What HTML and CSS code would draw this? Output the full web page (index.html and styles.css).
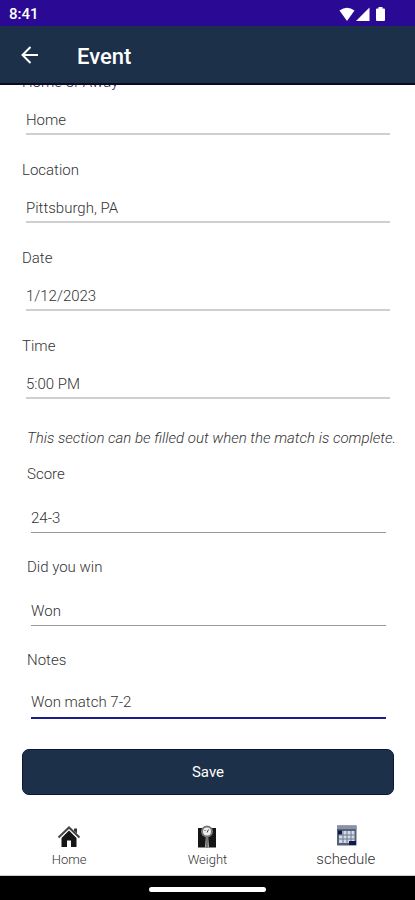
FILE: index.html
```html
<!DOCTYPE html>
<html lang="en">
<head>
<meta charset="utf-8">
<meta name="viewport" content="width=device-width, initial-scale=1">
<title>Event</title>
<link rel="stylesheet" href="styles.css">
</head>
<body>
<div class="status">
  <span>8:41</span>
  <svg class="status-icons" width="48" height="16" viewBox="0 0 48 16" fill="#fff" aria-hidden="true">
    <path d="M0.500 4.500Q8-1 15.500 4.500L8 15Z"/>
    <path d="M30.500 1.500V15H17Z"/>
    <path d="M39.500 1h4v1.500h1.500a1 1 0 0 1 1 1V14a1 1 0 0 1-1 1h-7a1 1 0 0 1-1-1V3.500a1 1 0 0 1 1-1h1.500Z"/>
  </svg>
</div>
<header class="bar">
  <button class="back" type="button" aria-label="Back">
    <svg width="20" height="20" viewBox="0 0 20 20" fill="none" stroke="#fff" stroke-width="2" aria-hidden="true"><path d="M18 10H3M10.500 2L2.500 10L10.500 18"/></svg>
  </button>
  <h1>Event</h1>
</header>
<main class="content">
  <form class="form">
    <div class="field"><label class="accent" for="place">Home or Away</label><input id="place" value="Home"></div>
    <div class="field"><label for="location">Location</label><input id="location" value="Pittsburgh, PA"></div>
    <div class="field"><label for="date">Date</label><input id="date" value="1/12/2023"></div>
    <div class="field"><label for="time">Time</label><input id="time" value="5:00 PM"></div>
    <section class="result">
      <p class="hint">This section can be filled out when the match is complete.</p>
      <div class="field"><label for="score">Score</label><input id="score" value="24-3"></div>
      <div class="field"><label for="win">Did you win</label><input id="win" value="Won"></div>
      <div class="field active"><label for="notes">Notes</label><input id="notes" value="Won match 7-2"></div>
    </section>
    <button class="save" type="button">Save</button>
  </form>
</main>
<nav class="tabs">
  <a href="#home">
    <svg width="24" height="24" viewBox="0 0 24 24" aria-hidden="true"><path d="M4.500 13L12 5.500L19.500 13V22H14V15.500H10V22H4.500Z" fill="#151515"/><path d="M1.500 12.500L12 2.500L22.500 12.500" fill="none" stroke="#444" stroke-width="2"/><path d="M17 3.500h3v5l-3-3Z" fill="#333"/></svg>
    <span>Home</span>
  </a>
  <a href="#weight">
    <svg width="24" height="24" viewBox="0 0 24 24" aria-hidden="true"><path d="M3 3H21V22.500H3Z" fill="#151515"/><path d="M11 10h2l1 12.500h-4Z" fill="#bbb"/><path d="M12 11V22.500" stroke="#333"/><circle cx="12" cy="6.500" r="5" fill="#eee" stroke="#777" stroke-width="2"/><path d="M12 7.500L13.500 4.500M9.500 6l1-1" stroke="#444"/></svg>
    <span>Weight</span>
  </a>
  <a class="current" href="#schedule">
    <svg width="24" height="24" viewBox="0 0 24 24" aria-hidden="true"><path d="M3 1.500H22.500V21.500H3Z" fill="#566176"/><path d="M3 1.500H22.500V5H3Z" fill="#8793a8"/><path d="M5 7H20.500V19H5Z" fill="#d3dae5"/><path d="M5 11H20.500M5 15H20.500M9 7V19M13 7V19M17 7V19" stroke="#6b788e"/><path d="M4 6.500H8V10.500H4ZM15 17H22V21H15Z" fill="#10194b"/></svg>
    <span>schedule</span>
  </a>
</nav>
<div class="gesture"><div class="handle"></div></div>
</body>
</html>
```
FILE: styles.css
```css
* { box-sizing: border-box; }

body {
  margin: 0;
  min-height: 100vh;
  display: flex;
  flex-direction: column;
  background: #fff;
  color: #333;
  font: 300 15px/20px Roboto, sans-serif;
}

.status {
  height: 26px;
  padding: 1px 28px 0 9px;
  display: flex;
  align-items: center;
  justify-content: space-between;
  background: #2a0a94;
  color: #fff;
  font-size: 15px;
  font-weight: 500;
}

.bar {
  height: 59px;
  padding: 0 20px;
  display: flex;
  align-items: center;
  gap: 37px;
  background: #1d3049;
  border-bottom: 2px solid #080c1c;
  color: #fff;
}

.bar h1 {
  margin: 0;
  padding-top: 4px;
  font-size: 22px;
  font-weight: 500;
  line-height: 28px;
}

.back {
  display: flex;
  padding: 0;
  border: 0;
  background: none;
}

.content {
  flex: 1;
  overflow: hidden;
}

/* The form is scrolled part of the way under the app bar. */
.form {
  margin-top: -13px;
  padding: 0 21px 0 22px;
}

.field {
  display: flex;
  flex-direction: column;
  gap: 15px;
  margin-bottom: 25px;
}

.accent { color: #1c1c6c; }

.field input {
  height: 28px;
  margin: 0 4px;
  padding: 0;
  border: 0;
  border-bottom: 2px solid #cfcfcf;
  border-radius: 0;
  outline: 0;
  background: none;
  color: #333;
  font: inherit;
}

.result { padding: 4px 0 0 5px; }

.hint {
  margin: 0 0 16px;
  font-style: italic;
  white-space: nowrap;
}

.result .field {
  gap: 19px;
  margin-bottom: 24px;
}

.result input {
  height: 30px;
  margin-right: 8px;
  border-bottom: 1px solid #999;
}

.result .active {
  gap: 16px;
  margin-bottom: 30px;
}

.active input {
  height: 33px;
  border-bottom: 2px solid #1c1c8c;
}

.save {
  display: block;
  width: 100%;
  height: 46px;
  padding: 0;
  border: 1px solid #0c1838;
  border-radius: 7px;
  background: #1d3049;
  color: #fff;
  font: 400 15px/20px Roboto, sans-serif;
}

.tabs {
  display: grid;
  grid-template-columns: repeat(3, 1fr);
  height: 56px;
  border-bottom: 1px solid #ccc;
}

.tabs a {
  display: flex;
  flex-direction: column;
  align-items: center;
  padding-top: 5px;
  color: #333;
  font-size: 13px;
  text-decoration: none;
}

.tabs span { line-height: 22px; }

.tabs .current {
  padding-top: 4px;
  font-size: 15px;
}

.gesture {
  height: 24px;
  display: flex;
  align-items: center;
  justify-content: center;
  padding-top: 3px;
  background: #000;
}

.handle {
  width: 28%;
  height: 5px;
  border-radius: 3px;
  background: #fff;
}
```
